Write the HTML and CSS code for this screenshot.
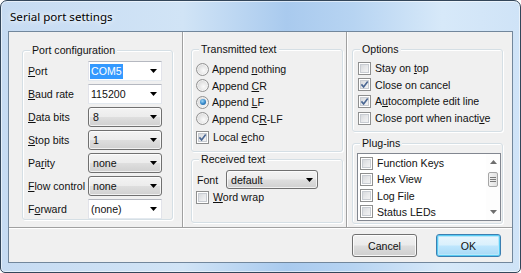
FILE: index.html
```html
<!DOCTYPE html>
<html>
<head>
<meta charset="utf-8">
<title>Serial port settings</title>
<link rel="stylesheet" href="styles.css">
</head>
<body>
<div class="window">
  <div class="titlebar"><span class="title">Serial port settings</span></div>
  <div class="client">
    <div class="panels">
      <div class="panel p1">
        <div class="group g-port">
          <div class="legend">Port configuration</div>
          <div class="form">
            <div class="row"><span class="lbl"><u>P</u>ort</span><div class="combo edit"><span class="sel">COM5</span><svg class="arrow" width="7" height="4" viewBox="0 0 7 4"><path d="M0 0H7L3.5 4Z"/></svg></div></div>
            <div class="row"><span class="lbl"><u>B</u>aud rate</span><div class="combo edit"><span>115200</span><svg class="arrow" width="7" height="4" viewBox="0 0 7 4"><path d="M0 0H7L3.5 4Z"/></svg></div></div>
            <div class="row"><span class="lbl"><u>D</u>ata bits</span><div class="combo list"><span>8</span><svg class="arrow" width="7" height="4" viewBox="0 0 7 4"><path d="M0 0H7L3.5 4Z"/></svg></div></div>
            <div class="row"><span class="lbl"><u>S</u>top bits</span><div class="combo list"><span>1</span><svg class="arrow" width="7" height="4" viewBox="0 0 7 4"><path d="M0 0H7L3.5 4Z"/></svg></div></div>
            <div class="row"><span class="lbl">Pa<u>r</u>ity</span><div class="combo list"><span>none</span><svg class="arrow" width="7" height="4" viewBox="0 0 7 4"><path d="M0 0H7L3.5 4Z"/></svg></div></div>
            <div class="row"><span class="lbl"><u>F</u>low control</span><div class="combo list"><span>none</span><svg class="arrow" width="7" height="4" viewBox="0 0 7 4"><path d="M0 0H7L3.5 4Z"/></svg></div></div>
            <div class="row"><span class="lbl">F<u>o</u>rward</span><div class="combo edit"><span>(none)</span><svg class="arrow" width="7" height="4" viewBox="0 0 7 4"><path d="M0 0H7L3.5 4Z"/></svg></div></div>
          </div>
        </div>
      </div>

      <div class="panel p2">
        <div class="group g-tx">
          <div class="legend">Transmitted text</div>
          <div class="opts">
            <div class="item radio-item"><span class="radio"></span><span>Append <u>n</u>othing</span></div>
            <div class="item radio-item"><span class="radio"></span><span>Append <u>C</u>R</span></div>
            <div class="item radio-item"><span class="radio on"><span class="dot"></span></span><span>Append <u>L</u>F</span></div>
            <div class="item radio-item"><span class="radio"></span><span>Append C<u>R</u>-LF</span></div>
            <div class="item echo"><span class="check"><svg width="9" height="9" viewBox="0 0 9 9"><path d="M1.4 4.4 3.6 6.9 7.7 1.5" fill="none" stroke="#4a6793" stroke-width="1.6"/></svg></span><span>Local <u>e</u>cho</span></div>
          </div>
        </div>
        <div class="group g-rx">
          <div class="legend">Received text</div>
          <div class="rx">
            <div class="fontrow"><span class="flbl">Font</span><div class="combo list wide"><span>default</span><svg class="arrow" width="7" height="4" viewBox="0 0 7 4"><path d="M0 0H7L3.5 4Z"/></svg></div></div>
            <div class="item"><span class="check"></span><span><u>W</u>ord wrap</span></div>
          </div>
        </div>
      </div>

      <div class="panel p3">
        <div class="group g-opt">
          <div class="legend">Options</div>
          <div class="opts3">
            <div class="item"><span class="check"></span><span>Stay on <u>t</u>op</span></div>
            <div class="item"><span class="check"><svg width="9" height="9" viewBox="0 0 9 9"><path d="M1.4 4.4 3.6 6.9 7.7 1.5" fill="none" stroke="#4a6793" stroke-width="1.6"/></svg></span><span>Close on cancel</span></div>
            <div class="item"><span class="check"><svg width="9" height="9" viewBox="0 0 9 9"><path d="M1.4 4.4 3.6 6.9 7.7 1.5" fill="none" stroke="#4a6793" stroke-width="1.6"/></svg></span><span>A<u>u</u>tocomplete edit line</span></div>
            <div class="item"><span class="check"></span><span>Close port when inacti<u>v</u>e</span></div>
          </div>
        </div>
        <div class="group g-plug">
          <div class="legend">Plug-ins</div>
          <div class="listbox">
            <div class="items">
              <div class="item li"><span class="check"></span><span>Function Keys</span></div>
              <div class="item li"><span class="check"></span><span>Hex View</span></div>
              <div class="item li"><span class="check"></span><span>Log File</span></div>
              <div class="item li"><span class="check"></span><span>Status LEDs</span></div>
            </div>
            <div class="scrollbar">
              <div class="sb-btn"><svg width="7" height="4" viewBox="0 0 7 4"><path d="M0 4H7L3.5 0Z"/></svg></div>
              <div class="track">
                <div class="thumb"><span></span><span></span><span></span></div>
              </div>
              <div class="sb-btn"><svg width="7" height="4" viewBox="0 0 7 4"><path d="M0 0H7L3.5 4Z"/></svg></div>
            </div>
          </div>
        </div>
      </div>
    </div>
    <div class="buttons">
      <button class="btn">Cancel</button>
      <button class="btn default">OK</button>
    </div>
  </div>
</div>
</body>
</html>
```
FILE: styles.css
```css
* { box-sizing: border-box; }
html, body { margin: 0; padding: 0; }
body {
  width: 521px;
  height: 273px;
  overflow: hidden;
  background: #ffffff;
  font-family: "Liberation Sans", Arial, sans-serif;
  font-size: 10.6px;
  color: #111;
}
u { text-decoration: underline; text-underline-offset: 1px; }

.window {
  width: 521px;
  height: 273px;
  border: 1px solid #33465a;
  border-radius: 7px 7px 5px 5px;
  background:
    linear-gradient(to right, #c6dbf2 0%, #d1e4f6 35%, #a9caee 55%, #b7d4f2 68%, #d7e9f9 85%, #cfe3f7 100%);
  box-shadow: inset 0 0 0 1px rgba(255,255,255,0.55);
  padding: 0 7px 9px;
  display: flex;
  flex-direction: column;
}
.titlebar {
  height: 30px;
  display: flex;
  align-items: center;
  padding-left: 2px;
}
.title {
  font-family: "Noto Sans", "Liberation Sans", sans-serif;
  font-size: 11.6px;
  color: #000;
  text-shadow: 0 0 8px #ffffff, 0 0 4px rgba(255,255,255,0.9);
}
.client {
  flex: 1;
  border: 1px solid #72879c;
  background: #f0f0f0;
  display: flex;
  flex-direction: column;
}
.panels {
  display: flex;
  height: 196px;
  border-bottom: 1px solid #a0a0a0;
  box-shadow: 0 1px 0 #ffffff;
}
.panel { height: 195px; }
.p1 { width: 174px; border-right: 1px solid #a0a0a0; padding: 18px 0 0 13px; }
.p2 { width: 164px; border-left: 1px solid #fff; border-right: 1px solid #a0a0a0; padding: 17px 0 0 7px; }
.p3 { width: 165px; border-left: 1px solid #fff; padding: 17px 0 0 4px; }

.group {
  border: 1px solid #d5dfe5;
  border-radius: 3px;
  box-shadow: inset 1px 1px 0 #fff, 1px 1px 0 #fff;
  display: flex;
  flex-direction: column;
}
.legend {
  align-self: flex-start;
  margin: -7px 0 0 7px;
  padding: 0 2px;
  background: #f0f0f0;
  height: 13px;
  line-height: 13px;
  white-space: nowrap;
}
.g-port { width: 151px; height: 170px; }
.g-tx { width: 152px; height: 103px; }
.g-rx { width: 152px; height: 64px; margin-top: 7px; }
.g-opt { width: 151px; height: 83px; }
.g-plug { width: 151px; height: 81px; margin-top: 11px; }

/* port form */
.form { margin-top: 4px; padding-left: 5px; display: flex; flex-direction: column; gap: 3px; }
.row { display: flex; align-items: center; height: 20px; }
.lbl { width: 60px; white-space: nowrap; }
.combo {
  width: 74px;
  height: 20px;
  display: flex;
  align-items: center;
  justify-content: space-between;
  padding: 0 4px 0 2px;
  white-space: nowrap;
}
.combo .arrow { fill: #000; flex: none; }
.combo.edit {
  background: #fff;
  border: 1px solid;
  border-color: #b5b8c0 #e2e3ea #e3e9ef #e2e3ea;
}
.combo.list {
  border: 1px solid #707070;
  border-radius: 3px;
  padding-left: 4px;
  background: linear-gradient(#f3f3f3 0%, #ececec 48%, #dedede 52%, #d0d0d0 100%);
  box-shadow: inset 0 0 0 1px rgba(255,255,255,0.7);
}
.combo.wide { width: 92px; height: 19px; }
.sel {
  background: #3399ff;
  color: #fff;
  padding: 0 1px;
  line-height: 15px;
  margin-left: -1px;
}

/* option items */
.opts { margin-top: 5px; padding-left: 4px; display: flex; flex-direction: column; }
.opts3 { margin-top: 4px; padding-left: 5px; display: flex; flex-direction: column; }
.item { display: flex; align-items: center; gap: 4px; height: 16.6px; white-space: nowrap; }
.radio-item { gap: 3px; height: 16.5px; }
.echo { margin-top: 2px; height: 16px; }

.radio {
  width: 13px;
  height: 13px;
  flex: none;
  border-radius: 50%;
  border: 1px solid #929292;
  background: radial-gradient(circle at 60% 60%, #fbfbfb 0%, #e6e6e6 45%, #c8c8c8 100%);
  box-shadow: inset 0 0 0 1px rgba(255,255,255,0.6);
  display: flex;
  align-items: center;
  justify-content: center;
}
.dot {
  width: 6px;
  height: 6px;
  border-radius: 50%;
  background: radial-gradient(circle at 40% 35%, #9fd8f8 0%, #3a8ccc 50%, #124b86 100%);
}
.check {
  width: 13px;
  height: 13px;
  flex: none;
  border: 1px solid #8e8f8f;
  background: linear-gradient(135deg, #cfd2d6 0%, #e9eaec 55%, #f8f8f8 100%);
  box-shadow: inset 0 0 0 1px #fff, inset 0 0 0 2px #c8ccd2;
  display: flex;
  align-items: center;
  justify-content: center;
}

/* received text */
.rx { margin-top: 4px; padding-left: 4px; display: flex; flex-direction: column; }
.fontrow { display: flex; align-items: center; height: 19px; }
.flbl { width: 30px; padding-left: 1px; }

/* plug-ins list */
.listbox {
  margin: 3px 0 0 4px;
  width: 144px;
  height: 68px;
  border: 1px solid #828790;
  background: #fff;
  display: flex;
}
.items { flex: 1; padding: 1px 0 0 2px; display: flex; flex-direction: column; }
.li { height: 16.3px; }
.scrollbar {
  width: 14px;
  display: flex;
  flex-direction: column;
  background: #fdfdfd;
}
.sb-btn { height: 16px; display: flex; align-items: center; justify-content: center; fill: #6d6d6d; }
.track { flex: 1; padding: 2px 2px 0; }
.thumb {
  height: 15px;
  border: 1px solid #a6a6a6;
  border-radius: 2px;
  background: linear-gradient(to right, #f3f3f3, #e2e2e2);
  display: flex;
  flex-direction: column;
  align-items: center;
  justify-content: center;
  gap: 1px;
}
.thumb span { width: 6px; height: 1px; background: #7a7a7a; }

/* buttons */
.buttons {
  display: flex;
  justify-content: flex-end;
  gap: 19px;
  padding: 6px 11px 0 0;
}
.btn {
  width: 65px;
  height: 23px;
  border: 1px solid #707070;
  border-radius: 3px;
  background: linear-gradient(#f2f2f2 0%, #ebebeb 48%, #dddddd 52%, #cfcfcf 100%);
  box-shadow: inset 0 0 0 1px rgba(255,255,255,0.8);
  font-family: "Liberation Sans", Arial, sans-serif;
  font-size: 10.6px;
  color: #111;
  padding: 0;
}
.btn.default {
  border-color: #3c7fb1;
  background: linear-gradient(#eaf6fd 0%, #d9f0fc 48%, #bee6fd 52%, #a7d9f5 100%);
  box-shadow: inset 0 0 0 1px #58cbf3, inset 0 0 0 2px #b8e8fb;
}
```
